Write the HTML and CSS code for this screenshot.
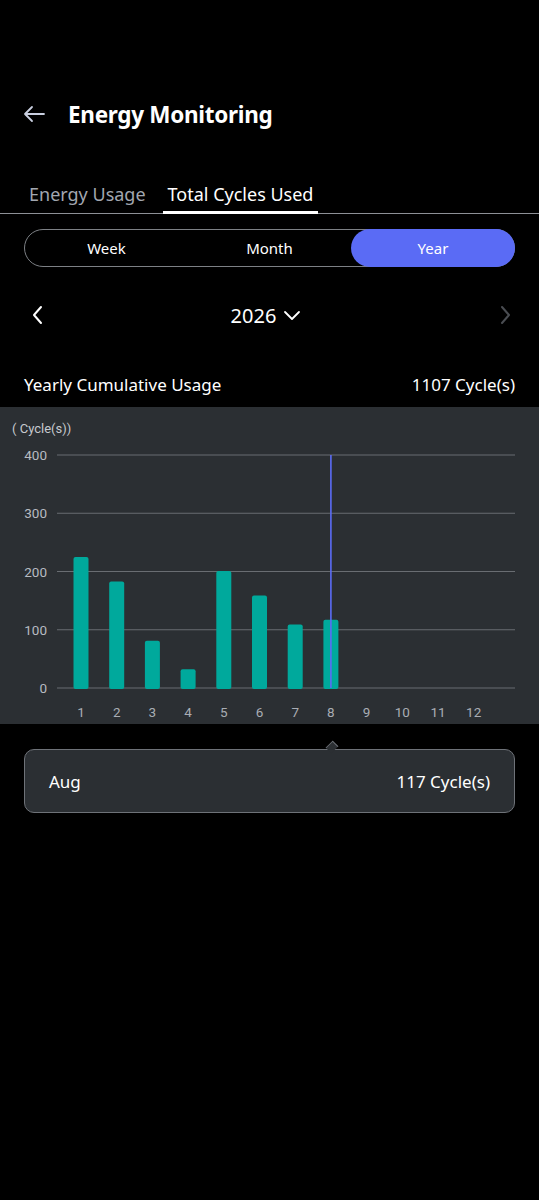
FILE: index.html
```html
<!doctype html>
<html lang="en">
  <head>
    <meta charset="UTF-8" />
    <meta name="viewport" content="width=device-width, initial-scale=1.0" />
    <title>Energy Monitoring</title>
    <link rel="stylesheet" href="styles.css">
  </head>
  <body>
    <header class="top-bar">
      <button class="back-btn" aria-label="Back">
        <svg width="24" height="20" viewBox="0 0 24 20">
          <path d="M22 10H3M10 3L3 10l7 7" fill="none" stroke="#c9cfe0" stroke-width="1.8" stroke-linecap="round" stroke-linejoin="round"/>
        </svg>
      </button>
      <h1>Energy Monitoring</h1>
    </header>

    <nav class="tabs">
      <div class="tab">Energy Usage</div>
      <div class="tab active">Total Cycles Used</div>
    </nav>

    <div class="segment">
      <div class="seg-item">Week</div>
      <div class="seg-item">Month</div>
      <div class="seg-item selected">Year</div>
    </div>

    <div class="year-nav">
      <svg class="nav-arrow" width="12" height="20" viewBox="0 0 12 20">
        <path d="M9 2L2 10l7 8" fill="none" stroke="#fff" stroke-width="2" stroke-linecap="round" stroke-linejoin="round"/>
      </svg>
      <div class="year-label">
        2026
        <svg width="18" height="12" viewBox="0 0 18 12">
          <path d="M2 3l7 7 7-7" fill="none" stroke="#fff" stroke-width="1.8" stroke-linecap="round" stroke-linejoin="round"/>
        </svg>
      </div>
      <svg class="nav-arrow" width="12" height="20" viewBox="0 0 12 20">
        <path d="M3 2l7 8-7 8" fill="none" stroke="#4a4d52" stroke-width="2" stroke-linecap="round" stroke-linejoin="round"/>
      </svg>
    </div>

    <div class="summary">
      <span>Yearly Cumulative Usage</span>
      <span>1107 Cycle(s)</span>
    </div>

    <section class="chart-panel">
      <svg id="chart" width="539" height="317" viewBox="0 0 539 317"></svg>
    </section>

    <div class="tooltip">
      <span>Aug</span>
      <span>117 Cycle(s)</span>
    </div>

    <script>
      const values = [225, 183, 81, 32, 201, 159, 109, 117, 0, 0, 0, 0];
      const selected = 7;
      const svg = document.getElementById("chart");
      const ns = "http://www.w3.org/2000/svg";
      const top0 = 48;
      const base = 281;
      const scale = (base - top0) / 400;

      function el(name, attrs, text) {
        const node = document.createElementNS(ns, name);
        for (const k in attrs) node.setAttribute(k, attrs[k]);
        if (text !== undefined) node.textContent = text;
        svg.appendChild(node);
        return node;
      }

      el("text", { x: 12, y: 26, class: "unit" }, "( Cycle(s))");

      for (let v = 0; v <= 400; v += 100) {
        const y = base - v * scale;
        el("line", { x1: 57, x2: 515, y1: y, y2: y, class: "grid" });
        el("text", { x: 47, y: y + 5, class: "y-label" }, v);
      }

      values.forEach((v, i) => {
        const cx = 81 + i * 35.7;
        if (v > 0) {
          const h = v * scale;
          el("rect", { x: cx - 7.5, y: base - h, width: 15, height: h + 1, rx: 2, class: "bar" });
        }
        el("text", { x: cx, y: 310, class: "x-label" }, i + 1);
      });

      const sx = 81 + selected * 35.7;
      el("line", { x1: sx, x2: sx, y1: top0, y2: base, class: "marker" });
    </script>
  </body>
</html>
```

FILE: styles.css
```css
body {
  margin: 0;
  background: #000;
  color: #fff;
  font-family: "Noto Sans", "Open Sans", sans-serif;
  width: 539px;
  min-height: 1200px;
}
.top-bar {
  display: flex;
  align-items: center;
  height: 56px;
  margin-top: 86px;
  padding-left: 22px;
}
.back-btn {
  background: none;
  border: 0;
  padding: 0;
  width: 24px;
  height: 20px;
  display: flex;
}
.top-bar h1 {
  margin: 0 0 0 22px;
  font-size: 22.5px;
  font-weight: 700;
  letter-spacing: -0.3px;
}
.tabs {
  display: flex;
  gap: 12px;
  margin-top: 30px;
  padding-left: 24px;
  height: 41px;
  border-bottom: 1px solid #8d9096;
}
.tab {
  padding: 2px 5px 0;
  font-size: 18px;
  line-height: 40px;
  color: #a2a7b0;
}
.tab.active {
  color: #fff;
  border-bottom: 3px solid #fff;
  margin-bottom: -1px;
  height: 37px;
}
.segment {
  display: grid;
  grid-template-columns: repeat(3, 1fr);
  margin: 15px 24px 0;
  height: 38px;
  border: 1px solid #7d8085;
  border-radius: 19px;
  box-sizing: border-box;
}
.seg-item {
  display: flex;
  align-items: center;
  justify-content: center;
  font-size: 15px;
  color: #fff;
  border-radius: 19px;
}
.seg-item.selected {
  background: #5a6bf5;
  margin: -1px -1px -1px 0;
}
.year-nav {
  display: flex;
  align-items: center;
  justify-content: space-between;
  height: 52px;
  margin-top: 22px;
  padding: 0 28px 0 32px;
}
.year-label {
  display: flex;
  align-items: center;
  gap: 7px;
  font-size: 20px;
  margin-right: 11px;
}
.summary {
  display: flex;
  justify-content: space-between;
  align-items: center;
  height: 42px;
  margin-top: 22px;
  padding: 0 24px;
  font-size: 17px;
}
.chart-panel {
  margin-top: 2px;
  background: #2b2f33;
  height: 317px;
}
.chart-panel svg {
  display: block;
}
.unit {
  fill: #c6c9ce;
  font-size: 13px;
  font-family: Roboto, sans-serif;
}
.grid {
  stroke: #696d72;
  stroke-width: 1.2;
}
.y-label {
  fill: #b7bbc1;
  font-size: 13.5px;
  font-family: Roboto, sans-serif;
  text-anchor: end;
}
.x-label {
  fill: #a9adb4;
  font-size: 13.5px;
  font-family: Roboto, sans-serif;
  text-anchor: middle;
}
.bar {
  fill: #00a99c;
}
.marker {
  stroke: #5b6cf6;
  stroke-width: 1.6;
}
.tooltip {
  position: relative;
  display: flex;
  justify-content: space-between;
  align-items: center;
  margin: 25px 24px 0;
  height: 64px;
  padding: 0 24px;
  background: #2b2f33;
  border: 1px solid #6e7278;
  border-radius: 10px;
  box-sizing: border-box;
  font-size: 17px;
}
.tooltip::before {
  content: "";
  position: absolute;
  top: -8px;
  left: 302px;
  width: 9px;
  height: 9px;
  background: #2b2f33;
  border-left: 1px solid #6e7278;
  border-top: 1px solid #6e7278;
  transform: rotate(45deg) scaleX(0.8);
}
```
